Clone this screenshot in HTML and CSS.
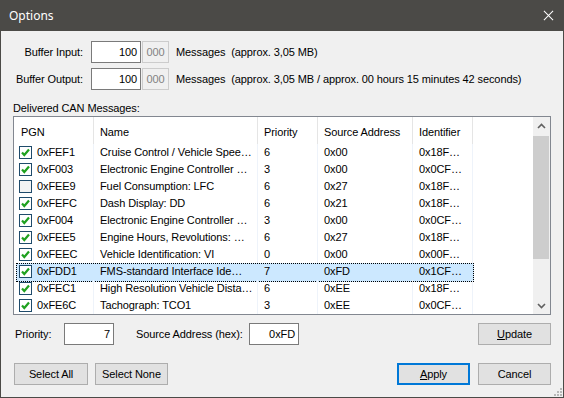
FILE: index.html
```
<!DOCTYPE html>
<html lang="en">
<head>
  <meta charset="UTF-8">
  <title>Options</title>
  <link rel="stylesheet" href="styles.css">
</head>
<body>
  <div class="window">
    <div class="titlebar">
      <span class="title">Options</span>
      <svg class="close" viewBox="0 0 12 12">
        <path d="M1 1L11 11M11 1L1 11"></path>
      </svg>
    </div>

    <div class="content">
      <div class="buffer-row">
        <span class="buffer-label">Buffer Input:</span>
        <div class="textbox">100</div>
        <div class="textbox disabled">000</div>
        <span class="buffer-info">Messages&nbsp; (approx. 3,05 MB)</span>
      </div>
      <div class="buffer-row second">
        <span class="buffer-label">Buffer Output:</span>
        <div class="textbox">100</div>
        <div class="textbox disabled">000</div>
        <span class="buffer-info">Messages&nbsp; (approx. 3,05 MB / approx. 00 hours 15 minutes 42 seconds)</span>
      </div>

      <div class="group-label">Delivered CAN Messages:</div>

      <div class="listview">
        <div class="list-body">
          <div class="list-head">
            <div class="cell first">PGN</div>
            <div class="cell">Name</div>
            <div class="cell">Priority</div>
            <div class="cell">Source Address</div>
            <div class="cell">Identifier</div>
            <div class="cell"></div>
          </div>

          <div class="row">
            <div class="cell first"><span class="check on"><svg viewBox="0 0 11 11"><path d="M2 5.5L4.3 8L9 2.5"></path></svg></span>0xFEF1</div>
            <div class="cell">Cruise Control / Vehicle Spee…</div>
            <div class="cell">6</div>
            <div class="cell">0x00</div>
            <div class="cell">0x18F…</div>
            <div class="cell"></div>
          </div>
          <div class="row">
            <div class="cell first"><span class="check on"><svg viewBox="0 0 11 11"><path d="M2 5.5L4.3 8L9 2.5"></path></svg></span>0xF003</div>
            <div class="cell">Electronic Engine Controller …</div>
            <div class="cell">3</div>
            <div class="cell">0x00</div>
            <div class="cell">0x0CF…</div>
            <div class="cell"></div>
          </div>
          <div class="row">
            <div class="cell first"><span class="check"></span>0xFEE9</div>
            <div class="cell">Fuel Consumption: LFC</div>
            <div class="cell">6</div>
            <div class="cell">0x27</div>
            <div class="cell">0x18F…</div>
            <div class="cell"></div>
          </div>
          <div class="row">
            <div class="cell first"><span class="check on"><svg viewBox="0 0 11 11"><path d="M2 5.5L4.3 8L9 2.5"></path></svg></span>0xFEFC</div>
            <div class="cell">Dash Display: DD</div>
            <div class="cell">6</div>
            <div class="cell">0x21</div>
            <div class="cell">0x18F…</div>
            <div class="cell"></div>
          </div>
          <div class="row">
            <div class="cell first"><span class="check on"><svg viewBox="0 0 11 11"><path d="M2 5.5L4.3 8L9 2.5"></path></svg></span>0xF004</div>
            <div class="cell">Electronic Engine Controller …</div>
            <div class="cell">3</div>
            <div class="cell">0x00</div>
            <div class="cell">0x0CF…</div>
            <div class="cell"></div>
          </div>
          <div class="row">
            <div class="cell first"><span class="check on"><svg viewBox="0 0 11 11"><path d="M2 5.5L4.3 8L9 2.5"></path></svg></span>0xFEE5</div>
            <div class="cell">Engine Hours, Revolutions: …</div>
            <div class="cell">6</div>
            <div class="cell">0x27</div>
            <div class="cell">0x18F…</div>
            <div class="cell"></div>
          </div>
          <div class="row">
            <div class="cell first"><span class="check on"><svg viewBox="0 0 11 11"><path d="M2 5.5L4.3 8L9 2.5"></path></svg></span>0xFEEC</div>
            <div class="cell">Vehicle Identification: VI</div>
            <div class="cell">0</div>
            <div class="cell">0x00</div>
            <div class="cell">0x00F…</div>
            <div class="cell"></div>
          </div>
          <div class="row selected">
            <div class="cell first"><span class="check on"><svg viewBox="0 0 11 11"><path d="M2 5.5L4.3 8L9 2.5"></path></svg></span>0xFDD1</div>
            <div class="cell">FMS-standard Interface Ide…</div>
            <div class="cell">7</div>
            <div class="cell">0xFD</div>
            <div class="cell">0x1CF…</div>
            <div class="cell"></div>
          </div>
          <div class="row">
            <div class="cell first"><span class="check on"><svg viewBox="0 0 11 11"><path d="M2 5.5L4.3 8L9 2.5"></path></svg></span>0xFEC1</div>
            <div class="cell">High Resolution Vehicle Dista…</div>
            <div class="cell">6</div>
            <div class="cell">0xEE</div>
            <div class="cell">0x18F…</div>
            <div class="cell"></div>
          </div>
          <div class="row">
            <div class="cell first"><span class="check on"><svg viewBox="0 0 11 11"><path d="M2 5.5L4.3 8L9 2.5"></path></svg></span>0xFE6C</div>
            <div class="cell">Tachograph: TCO1</div>
            <div class="cell">3</div>
            <div class="cell">0xEE</div>
            <div class="cell">0x0CF…</div>
            <div class="cell"></div>
          </div>
        </div>

        <div class="scrollbar">
          <div class="arrow">
            <svg viewBox="0 0 9 6"><path d="M1 5L4.5 1.5L8 5"></path></svg>
          </div>
          <div class="thumb"></div>
          <div class="arrow bottom">
            <svg viewBox="0 0 9 6"><path d="M1 1L4.5 4.5L8 1"></path></svg>
          </div>
        </div>
      </div>

      <div class="filter-row">
        <span class="priority-label">Priority:</span>
        <div class="textbox">7</div>
        <span class="source-label">Source Address (hex):</span>
        <div class="textbox">0xFD</div>
        <button class="btn update"><u>U</u>pdate</button>
      </div>

      <div class="button-row">
        <button class="btn select-all">Select All</button>
        <button class="btn select-none">Select None</button>
        <button class="btn apply"><u>A</u>pply</button>
        <button class="btn cancel">Cancel</button>
      </div>
    </div>

    <svg class="grip" viewBox="0 0 8 8">
      <rect x="6" y="0" width="2" height="2"></rect>
      <rect x="3" y="3" width="2" height="2"></rect>
      <rect x="6" y="3" width="2" height="2"></rect>
      <rect x="0" y="6" width="2" height="2"></rect>
      <rect x="3" y="6" width="2" height="2"></rect>
      <rect x="6" y="6" width="2" height="2"></rect>
    </svg>
  </div>
</body>
</html>
```

FILE: styles.css
```
* {
  margin: 0;
  padding: 0;
  box-sizing: border-box;
}

body {
  width: 564px;
  height: 398px;
  font-family: 'Liberation Sans', Arial, sans-serif;
  font-size: 11px;
  letter-spacing: -0.1px;
  color: #000;
  background: #f0f0f0;
  overflow: hidden;
}

.window {
  position: relative;
  width: 564px;
  height: 398px;
  background: #f0f0f0;
  border: 1px solid #4b4a47;
  border-top: none;
}

.titlebar {
  height: 31px;
  background: #4b4a47;
  display: flex;
  align-items: center;
  justify-content: space-between;
  padding: 0 10px 0 9px;
  margin: 0 -1px;
}

.title {
  font-family: 'Noto Sans', sans-serif;
  font-size: 12px;
  letter-spacing: 0;
  color: #fff;
}

.close {
  width: 11px;
  height: 11px;
  stroke: #fff;
  stroke-width: 1.1;
  fill: none;
}

.content {
  padding-top: 10px;
}

/* buffer settings */
.buffer-row {
  display: flex;
  align-items: center;
  height: 22px;
}

.buffer-row.second {
  margin-top: 5px;
}

.buffer-label {
  width: 82px;
  text-align: right;
  margin-right: 8px;
}

.textbox {
  width: 50px;
  height: 22px;
  line-height: 20px;
  background: #fff;
  border: 1px solid #7a7a7a;
  text-align: right;
  padding-right: 3px;
}

.textbox.disabled {
  width: 27px;
  margin-left: 1px;
  background: #f0f0f0;
  border-color: #cccccc;
  color: #838383;
  text-align: center;
  padding-right: 0;
}

.buffer-info {
  margin-left: 7px;
}

.group-label {
  margin-top: 12px;
  padding-left: 12px;
  height: 14px;
  line-height: 13px;
}

/* list view */
.listview {
  margin-left: 12px;
  width: 538px;
  height: 199px;
  border: 1px solid #828790;
  background: #fff;
  display: flex;
}

.list-body {
  flex: 1;
  overflow: hidden;
}

.list-head,
.row {
  display: grid;
  grid-template-columns: 79px 164px 60px 95px 60px 1fr;
}

.list-head {
  height: 27px;
}

.list-head .cell {
  line-height: 27px;
  padding-top: 2px;
  padding-left: 6px;
  border-left: 1px solid #e5e5e5;
}

.list-head .cell.first {
  padding-left: 7px;
  border-left: none;
}

.row {
  position: relative;
  height: 17px;
}

.cell {
  position: relative;
  white-space: nowrap;
  overflow: hidden;
  padding-left: 6px;
  line-height: 17px;
  border-left: 1px solid #eef3fa;
}

.row .cell.first {
  border-left: none;
  padding-left: 5px;
  display: flex;
  align-items: center;
}

.row.selected::before {
  content: "";
  position: absolute;
  left: 2px;
  top: 0;
  width: 456px;
  height: 17px;
  background: #cce8ff;
  border: 1px dotted #000;
}

.row.selected .cell {
  border-left-color: transparent;
}

.check {
  width: 13px;
  height: 13px;
  margin-right: 5px;
  border: 1px solid #1f4b6b;
  background: #f3f3f3;
  display: flex;
  align-items: center;
  justify-content: center;
}

.check.on {
  background: #fff;
}

.check svg {
  width: 11px;
  height: 11px;
  fill: none;
  stroke: #1fa11f;
  stroke-width: 2.2;
}

/* scrollbar */
.scrollbar {
  width: 17px;
  background: #f0f0f0;
  display: flex;
  flex-direction: column;
}

.arrow {
  height: 17px;
  display: flex;
  align-items: center;
  justify-content: center;
}

.arrow.bottom {
  margin-top: auto;
}

.arrow svg {
  width: 9px;
  height: 6px;
  fill: none;
  stroke: #606060;
  stroke-width: 1.6;
}

.thumb {
  margin: 2px 1px 0 0;
  height: 123px;
  background: #cdcdcd;
}

/* filter and buttons */
.filter-row {
  display: flex;
  align-items: center;
  height: 22px;
  margin-top: 8px;
}

.priority-label {
  margin-left: 14px;
  width: 49px;
}

.source-label {
  margin-left: 22px;
  width: 113px;
}

.btn {
  width: 73px;
  height: 22px;
  background: #e1e1e1;
  border: 1px solid #adadad;
  font-family: 'Liberation Sans', Arial, sans-serif;
  font-size: 11px;
  letter-spacing: -0.1px;
  color: #000;
}

.update {
  margin-left: auto;
  margin-right: 12px;
}

.button-row {
  display: flex;
  align-items: center;
  margin-top: 18px;
}

.select-all {
  margin-left: 13px;
  width: 74px;
}

.select-none {
  margin-left: 7px;
}

.apply {
  margin-left: auto;
  border: 2px solid #0078d7;
}

.cancel {
  margin-left: 8px;
  margin-right: 12px;
}

.grip {
  position: absolute;
  right: 1px;
  bottom: 1px;
  width: 8px;
  height: 8px;
  fill: #b8b8b8;
}
```
